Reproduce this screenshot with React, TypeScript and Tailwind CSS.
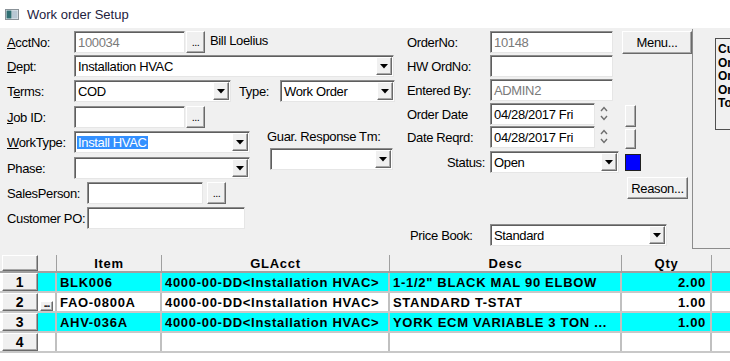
import React from "react";

const sunken =
  "bg-white border border-t-[#8c8c8c] border-l-[#8c8c8c] border-b-[#e6e6e6] border-r-[#e6e6e6] shadow-[inset_1px_1px_0_#5e5e5e]";
const raised =
  "bg-[#f0f0f0] border border-t-white border-l-white border-b-[#6a6a6a] border-r-[#6a6a6a] shadow-[inset_-1px_-1px_0_#a8a8a8]";

function Arrow() {
  return (
    <div className={`${raised} w-[16px] h-[18px] mr-[1px] flex items-center justify-center shrink-0`}>
      <svg width="8" height="5" viewBox="0 0 8 5">
        <path d="M0 0h8L4 4.5z" fill="#000" />
      </svg>
    </div>
  );
}

function Field({ className, children, gray }: { className: string; children?: React.ReactNode; gray?: boolean }) {
  return (
    <div className={`${sunken} ${className} h-[22px] flex items-center pl-[3px] ${gray ? "text-[#7a7a7a]" : "text-black"} overflow-hidden whitespace-nowrap shrink-0`}>
      {children}
    </div>
  );
}

function Select({ className, children }: { className: string; children?: React.ReactNode }) {
  return (
    <div className={`${sunken} ${className} h-[22px] flex items-center shrink-0`}>
      <div className="flex-1 pl-[3px] overflow-hidden whitespace-nowrap">{children}</div>
      <Arrow />
    </div>
  );
}

function Dots({ className }: { className: string }) {
  return (
    <div className={`${raised} ${className} h-[22px] flex items-end justify-center pb-[4px] text-[11px] leading-none tracking-[-0.5px] shrink-0`}>
      ...
    </div>
  );
}

function Spin() {
  return (
    <svg width="8" height="18" viewBox="0 0 8 18" className="ml-[5px] shrink-0">
      <path d="M1 6l3-3.5L7 6" stroke="#6e6e6e" strokeWidth="1.4" fill="none" />
      <path d="M1 11l3 3.5L7 11" stroke="#6e6e6e" strokeWidth="1.4" fill="none" />
    </svg>
  );
}

function L({ className, children }: { className: string; children: React.ReactNode }) {
  return <div className={`${className} shrink-0 whitespace-nowrap`}>{children}</div>;
}

const rows = [
  { n: "1", item: "BLK006", gl: "4000-00-DD<Installation HVAC>", desc: '1-1/2" BLACK MAL 90 ELBOW', qty: "2.00", cyan: true, dots: false },
  { n: "2", item: "FAO-0800A", gl: "4000-00-DD<Installation HVAC>", desc: "STANDARD T-STAT", qty: "1.00", cyan: false, dots: true },
  { n: "3", item: "AHV-036A", gl: "4000-00-DD<Installation HVAC>", desc: "YORK ECM VARIABLE 3 TON ...", qty: "1.00", cyan: true, dots: false },
  { n: "4", item: "", gl: "", desc: "", qty: "", cyan: false, dots: false },
];

export default function App() {
  return (
    <div className="w-[730px] h-[361px] overflow-hidden bg-white font-['Liberation_Sans',Arial,sans-serif] text-[13px] tracking-[-0.35px] text-black leading-none">
      {/* Title bar */}
      <div className="h-[28px] flex items-center pl-[5px]">
        <svg width="14" height="11" viewBox="0 0 14 11">
          <rect x="0.5" y="0.5" width="13" height="10" fill="#e8eef2" stroke="#8a9298" />
          <rect x="1.5" y="1.5" width="5" height="8" fill="#2f6f73" />
          <rect x="7" y="1.5" width="5.5" height="8" fill="#b8c8d4" />
        </svg>
        <span className="ml-[8px] text-[13px] tracking-normal text-[#1d2240]">Work order Setup</span>
      </div>

      {/* Form */}
      <div className="h-[227px] bg-[#f0f0f0] flex">
        {/* Left column */}
        <div className="w-[400px] shrink-0 pl-[7px] flex flex-col">
          <div className="mt-[3px] h-[22px] flex items-center">
            <L className="w-[67px]"><u>A</u>cctNo:</L>
            <Field className="w-[111px]" gray>100034</Field>
            <Dots className="ml-[1px] w-[19px]" />
            <span className="ml-[5px] -mt-[4px]">Bill Loelius</span>
          </div>
          <div className="mt-[2px] h-[22px] flex items-center">
            <L className="w-[67px]"><u>D</u>ept:</L>
            <Select className="w-[320px]">Installation HVAC</Select>
          </div>
          <div className="mt-[3px] h-[22px] flex items-center">
            <L className="w-[67px]">T<u>e</u>rms:</L>
            <Select className="w-[157px]">COD</Select>
            <L className="ml-[8px] w-[41px]">Type:</L>
            <Select className="w-[115px]">Work Order</Select>
          </div>
          <div className="mt-[4px] h-[22px] flex items-center">
            <L className="w-[67px]"><u>J</u>ob ID:</L>
            <Field className="w-[111px]" />
            <Dots className="ml-[1px] w-[19px]" />
          </div>
          <div className="flex">
            <div className="flex flex-col">
              <div className="mt-[3px] h-[22px] flex items-center">
                <L className="w-[67px]"><u>W</u>orkType:</L>
                <Select className="w-[176px]">
                  <span className="bg-[#3390ff] text-white px-[1px] -ml-[1px]">Install HVAC</span>
                </Select>
              </div>
              <div className="mt-[4px] h-[22px] flex items-center">
                <L className="w-[67px]">Phase:</L>
                <Select className="w-[176px]" />
              </div>
            </div>
            <div className="ml-[17px] flex flex-col">
              <L className="mt-[2px] h-[14px]">Guar. Response Tm:</L>
              <Select className="mt-[4px] ml-[3px] w-[123px]" />
            </div>
          </div>
          <div className="mt-[3px] h-[22px] flex items-center">
            <L className="w-[80px]">SalesPerson:</L>
            <Field className="w-[116px]" />
            <Dots className="ml-[4px] w-[19px]" />
          </div>
          <div className="mt-[3px] h-[22px] flex items-center">
            <L className="w-[80px]">Customer PO:</L>
            <Field className="w-[158px]" />
          </div>
        </div>

        {/* Middle column */}
        <div className="w-[292px] shrink-0 pl-[7px] flex flex-col">
          <div className="mt-[3px] h-[22px] flex items-center">
            <L className="w-[83px]">OrderNo:</L>
            <Field className="w-[123px]" gray>10148</Field>
            <div className={`${raised} ml-[9px] w-[70px] h-[23px] flex items-center justify-center shrink-0`}>Menu...</div>
          </div>
          <div className="mt-[2px] h-[22px] flex items-center">
            <L className="w-[83px]">HW OrdNo:</L>
            <Field className="w-[123px]" />
          </div>
          <div className="mt-[2px] h-[22px] flex items-center">
            <L className="w-[83px]">Entered By:</L>
            <Field className="w-[123px]" gray>ADMIN2</Field>
          </div>
          <div className="flex">
            <div className="flex flex-col">
              <div className="mt-[2px] h-[22px] flex items-center">
                <L className="w-[83px]">Order Date</L>
                <Field className="w-[105px]">04/28/2017 Fri</Field>
                <Spin />
              </div>
              <div className="mt-[1px] h-[22px] flex items-center">
                <L className="w-[83px]">Date Reqrd:</L>
                <Field className="w-[105px]">04/28/2017 Fri</Field>
                <Spin />
              </div>
            </div>
            <div className="ml-[17px] flex flex-col">
              <div className={`${raised} mt-[4px] w-[11px] h-[22px]`} />
              <div className={`${raised} mt-[2px] w-[11px] h-[20px]`} />
            </div>
          </div>
          <div className="mt-[2px] h-[22px] flex items-center">
            <L className="w-[83px] text-right pr-[5px]">Status:</L>
            <Select className="w-[129px]">Open</Select>
            <div className="ml-[6px] w-[16px] h-[17px] bg-[#0000ff] border border-[#202020] shrink-0" />
          </div>
          <div className="mt-[4px] flex justify-end pr-[4px]">
            <div className={`${raised} w-[61px] h-[22px] flex items-center justify-center`}>Reason...</div>
          </div>
          <div className="mt-[25px] h-[22px] flex items-center">
            <L className="w-[83px] pl-[3px]">Price Book:</L>
            <Select className="w-[177px]">Standard</Select>
          </div>
        </div>

        {/* Right panel */}
        <div className="mt-[1px] h-[220px] flex-1 min-w-0 overflow-hidden border-l border-b border-[#8c8c8c] pl-[22px] pt-[9px]">
          <div className="h-[92px] w-[60px] border border-[#505050] pl-[2px] pt-[4px] font-bold text-[12px] tracking-normal leading-[13.5px] overflow-hidden whitespace-nowrap">
            <div>Cust</div>
            <div>Ord</div>
            <div>Ord</div>
            <div>Ord</div>
            <div>Tot</div>
          </div>
        </div>
      </div>

      {/* Grid */}
      <div className="bg-white font-bold text-[13px] tracking-[0.7px]">
        <div className="h-[18px] grid grid-cols-[38px_19px_105px_228px_232px_90px_18px] bg-[#f0f0f0] border-b-2 border-[#a0a0a0]">
          <div className={`${raised} ml-[2px]`} />
          <div className="border-r border-[#a0a0a0]" />
          <div className="border-r border-[#a0a0a0] flex items-center justify-center">Item</div>
          <div className="border-r border-[#a0a0a0] flex items-center justify-center">GLAcct</div>
          <div className="border-r border-[#a0a0a0] flex items-center justify-center">Desc</div>
          <div className="border-r border-[#a0a0a0] flex items-center justify-center">Qty</div>
          <div />
        </div>
        {rows.map((r) => (
          <div
            key={r.n}
            className="h-[20px] grid grid-cols-[38px_19px_105px_228px_232px_90px_18px] border-b-2 border-[#c8c8c8]"
          >
            <div className={`${raised} ml-[2px] flex items-center justify-center text-[14px]`}>{r.n}</div>
            <div className={`${r.cyan ? "bg-[#00ffff]" : "bg-white"} border-r-2 border-[#c0c0c0] flex items-end justify-center`}>
              {r.dots && <div className={`${raised} w-[13px] h-[10px] flex items-end justify-center text-[10px] leading-none tracking-[-1px] pb-[1px]`}>...</div>}
            </div>
            <div className={`${r.cyan ? "bg-[#00ffff]" : "bg-white"} border-r-2 border-[#c0c0c0] flex items-center pl-[3px] whitespace-nowrap overflow-hidden`}>{r.item}</div>
            <div className={`${r.cyan ? "bg-[#00ffff]" : "bg-white"} border-r-2 border-[#c0c0c0] flex items-center pl-[3px] whitespace-nowrap overflow-hidden`}>{r.gl}</div>
            <div className={`${r.cyan ? "bg-[#00ffff]" : "bg-white"} border-r-2 border-[#c0c0c0] flex items-center pl-[3px] whitespace-nowrap overflow-hidden`}>{r.desc}</div>
            <div className={`${r.cyan ? "bg-[#00ffff]" : "bg-white"} border-r-2 border-[#c0c0c0] flex items-center justify-end pr-[4px]`}>{r.qty}</div>
            <div className={r.cyan ? "bg-[#00ffff]" : "bg-white"} />
          </div>
        ))}
      </div>
    </div>
  );
}
